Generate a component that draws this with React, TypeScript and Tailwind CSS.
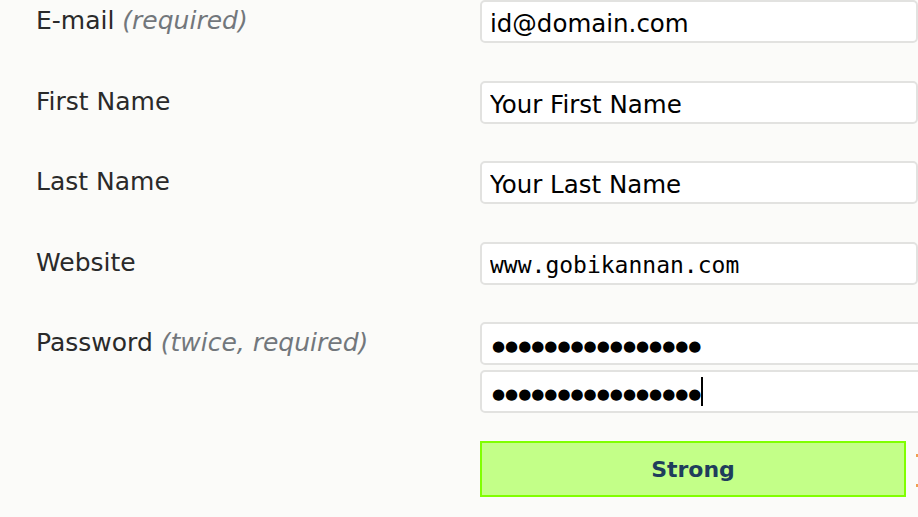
export default function App() {
  const label = "text-[25px] leading-[28px] pt-[7px] text-[#2a2a2a] w-[444px] shrink-0";
  const hint = "italic text-[#72777c]";
  const input =
    "block w-[470px] h-[43px] border-2 border-[#e2e2e0] rounded-[5px] bg-white px-[8px] pt-[3px] text-[24.5px] text-black outline-none";
  const pw = " !text-[15px] !pl-[10px] !pt-[4px] tracking-[0px]";
  const dots = "●●●●●●●●●●●●●●●●";

  return (
    <div
      className="w-[918px] h-[517px] overflow-hidden bg-[#fbfbf9]"
      style={{ fontFamily: "Verdana, 'DejaVu Sans', sans-serif" }}
    >
      <div className="pl-[36px] flex flex-col">
        {/* E-mail */}
        <div className="flex items-start mb-[38px]">
          <div className={label}>
            E-mail <span className={hint}>(required)</span>
          </div>
          <input className={input} defaultValue="id@domain.com" readOnly />
        </div>

        {/* First name */}
        <div className="flex items-start mb-[37px]">
          <div className={label}>First Name</div>
          <input className={input} defaultValue="Your First Name" readOnly />
        </div>

        {/* Last name */}
        <div className="flex items-start mb-[38px]">
          <div className={label}>Last Name</div>
          <input className={input} defaultValue="Your Last Name" readOnly />
        </div>

        {/* Website */}
        <div className="flex items-start mb-[37px]">
          <div className={label}>Website</div>
          <input
            className={input + " !text-[23px]"}
            style={{ fontFamily: "Consolas, 'DejaVu Sans Mono', monospace" }}
            defaultValue="www.gobikannan.com"
            readOnly
          />
        </div>

        {/* Password */}
        <div className="flex items-start">
          <div className={label}>
            Password <span className={hint}>(twice, required)</span>
          </div>
          <div className="flex flex-col gap-[5px]">
            <input className={input + pw} defaultValue={dots} readOnly />
            <div className="relative">
              <input className={input + pw} defaultValue={dots} readOnly />
              <span className="absolute left-[221px] top-[7px] w-[2px] h-[29px] bg-black" />
            </div>
          </div>
        </div>

        {/* Strength meter */}
        <div className="flex items-center mt-[28px]">
          <div className="w-[444px] shrink-0" />
          <div className="w-[426px] h-[56px] border-2 border-[#80ff00] bg-[#c3ff88] flex items-center justify-center text-[22px] font-bold text-[#1f3d5c]">
            Strong
          </div>
          <div className="ml-[10px] flex flex-col gap-[27px] pt-[2px]">
            <span className="block w-[2px] h-[3px] bg-[#f0a050]" />
            <span className="block w-[2px] h-[3px] bg-[#f0a050]" />
          </div>
        </div>
      </div>
    </div>
  );
}
